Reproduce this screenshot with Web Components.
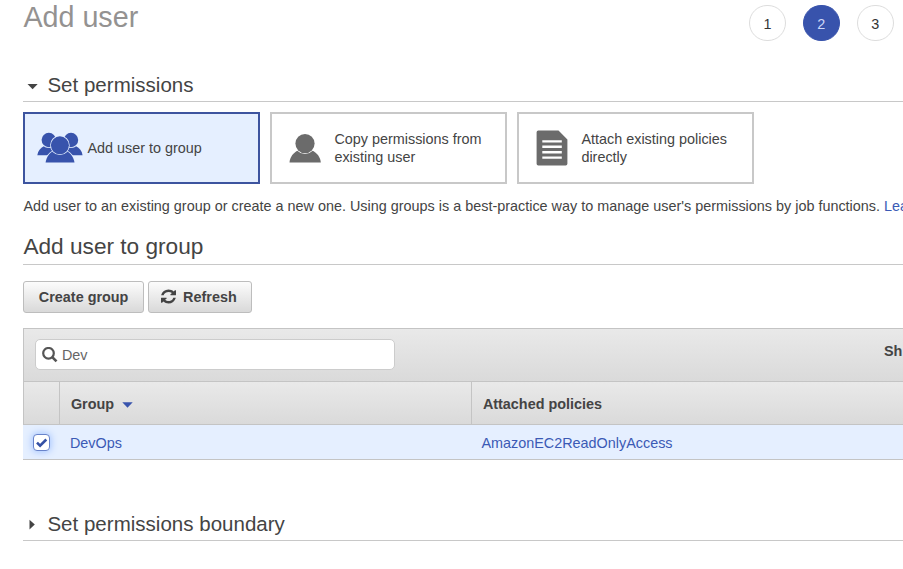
<!DOCTYPE html>
<html lang="en">
<head>
<meta charset="utf-8">
<title>Add user</title>
<style>
html,body{margin:0;height:100%;overflow:hidden;background:#fff}
body{font-family:"Liberation Sans",Arial,sans-serif;font-size:14.4px;color:#444}
</style>
</head>
<body>
<add-user-page></add-user-page>
<script>
function define(name, html) {
  const template = document.createElement('template');
  template.innerHTML = html;
  customElements.define(name, class extends HTMLElement {
    constructor() {
      super();
      this.attachShadow({ mode: 'open' }).append(template.content.cloneNode(true));
    }
  });
}

define('step-badge', `
<style>
:host{display:flex;align-items:center;justify-content:center;width:36.5px;height:36.5px;box-sizing:border-box;border:1px solid #ddd;border-radius:50%;font-size:14.4px;color:#333;padding-top:3px}
:host([active]){background:#3853ac;border-color:#3853ac;color:#ccd7f8}
</style><slot></slot>`);

define('section-title', `
<style>
:host{display:flex;height:34px;box-sizing:border-box;border-bottom:1px solid #c8c8c8;font-size:20.5px;line-height:33px;letter-spacing:.02px}
svg{flex:none;width:24px;height:33px;fill:#444}
.closed{display:none}
:host([collapsed]) .closed{display:block}
:host([collapsed]) .open{display:none}
</style>
<svg class="open" viewBox="0 0 24 33"><path d="M4.500 16h10.200L9.600 21.200z"/></svg>
<svg class="closed" viewBox="0 0 24 33"><path d="M6.500 12.700v9.800l5.300-4.900z"/></svg>
<slot></slot>`);

define('option-card', `
<style>
:host{display:flex;align-items:center;width:237px;height:72px;box-sizing:border-box;border:2px solid #c8c8c8;line-height:18.5px;padding-left:12px;color:#444}
:host([selected]){background:#e5efff;border-color:#3d549f}
.icon{display:flex;width:50px;flex:none}
:host(:not([selected])) .icon{color:#6b6b6b}
:host([selected]) .icon{color:#3853ac}
</style>
<div class="icon"><slot name="icon"></slot></div><div><slot></slot></div>`);

define('tool-button', `
<style>
:host{display:flex;align-items:center;justify-content:center;box-sizing:border-box;height:32px;border:1px solid #bdbdbd;border-radius:3px;background:linear-gradient(#fcfcfc,#d9d9d9);font-weight:bold;color:#444}
</style><slot></slot>`);

define('search-box', `
<style>
:host{display:flex;align-items:center;box-sizing:border-box;width:360px;height:31px;border:1px solid #ccc;border-radius:5px;background:#fff;padding-left:6px;color:#666}
svg{width:16px;height:16px;margin-right:4px}
</style>
<svg viewBox="0 0 16 16" fill="none" stroke="#555"><circle cx="6.500" cy="6.300" r="5.300" stroke-width="2.200"/><path d="M10.500 10.400l4 4" stroke-width="2.600"/></svg><slot></slot>`);

define('check-box', `
<style>
:host{display:flex;box-sizing:border-box;width:17px;height:17px;border:1px solid #6883ca;border-radius:4px;background:#fff;box-shadow:0 0 7px 1px #a5c5ff;margin-top:-1px}
</style>
<svg viewBox="0 0 15 15" width="15" height="15"><path d="M3 7.600l3.100 3.100 6.200-6.200" fill="none" stroke="#3450a5" stroke-width="2.600"/></svg>`);

define('group-table', `
<style>
:host{display:block}
.bar{display:flex;justify-content:space-between;box-sizing:border-box;height:53px;border-top:1px solid #c4c4c4;border-left:1px solid #c4c4c4;background:linear-gradient(#e9e9e9,#dadada);padding:10px 0 0 10.5px}
.bar b{width:19px;white-space:nowrap;line-height:24px}
.row{display:grid;grid-template-columns:36px 412px 1fr;box-sizing:border-box}
.head{height:44px;border-top:1px solid #c4c4c4;border-bottom:1px solid #c4c4c4;background:linear-gradient(#e9e9e9,#dadada);font-weight:bold}
.head>div{display:flex;align-items:center;border-left:1px solid #c4c4c4;padding-left:10.5px;padding-top:1px}
.body{height:35px;background:#e5efff;border-bottom:1px solid #c4c4c4;color:#3b5ab5}
.body>div{display:flex;align-items:center;padding:1px 0 0 10px}
.body>div:nth-child(2){padding-left:10.5px}
svg{margin:3px 0 0 8px}
</style>
<div class="bar"><search-box>Dev</search-box><b>Sh</b></div>
<div class="row head"><div></div><div>Group<svg width="11" height="6" viewBox="0 0 11 6"><path d="M.3.3h10.400L5.500 5.700z" fill="#3853ac"/></svg></div><div>Attached policies</div></div>
<div class="row body"><div><check-box></check-box></div><div>DevOps</div><div>AmazonEC2ReadOnlyAccess</div></div>`);

define('add-user-page', `
<style>
:host{display:block;padding-left:23.4px;width:903px;height:569px;box-sizing:border-box;overflow:hidden}
header{display:flex;justify-content:space-between;height:68px;padding-right:9.5px;box-sizing:border-box}
h1{font-size:28.7px;font-weight:400;color:#949291;margin:0;line-height:34px}
.steps{display:flex;gap:17.4px;padding-top:4.5px}
.cards{display:flex;gap:10px;padding-top:10px}
p{margin:12px 0 0;line-height:20px;white-space:nowrap;letter-spacing:.003px}
p span{color:#3b5ab5}
h2{font-size:22.65px;font-weight:400;margin:12px 0 16px;height:37px;box-sizing:border-box;border-bottom:1px solid #c8c8c8;line-height:37px;color:#444}
.actions{display:flex;gap:4px;margin-bottom:15px}
.create{width:120.500px}.refresh{width:104px}
.refresh svg{margin:-2px 7px 0 -2px}
.boundary{margin-top:47px}
svg{display:block}
</style>
<header><h1>Add user</h1><div class="steps"><step-badge>1</step-badge><step-badge active>2</step-badge><step-badge>3</step-badge></div></header>
<section-title>Set permissions</section-title>
<div class="cards">
<option-card selected><svg slot="icon" width="50" height="36" viewBox="0 0 50 36" fill="currentColor">
<g stroke="#e5efff" stroke-width="1.600">
<path stroke="none" d="M.300 25.200C.800 21 3.600 18 6.800 16.200h32.300c3.200 1.800 6 4.800 6.500 9z"/>
<circle cx="11.800" cy="10" r="7.200" paint-order="stroke"/><circle cx="34" cy="10" r="7.200" paint-order="stroke"/>
<path paint-order="stroke" d="M8.600 32.500c.8-5.500 3.700-9.600 8-11.500h12.700c4.300 1.900 7.300 6 8.200 11.500z"/>
<circle paint-order="stroke" cx="22.900" cy="15.300" r="9"/></g></svg>Add user to group</option-card>
<option-card><svg slot="icon" width="50" height="36" viewBox="0 0 50 36" fill="currentColor">
<path d="M5.500 32.400C6 26.800 9.500 22.500 14 20.500h14c4.700 2 8.300 6.200 8.800 11.900z"/>
<circle cx="21" cy="13.600" r="9.600" stroke="#fff" stroke-width="1.600" paint-order="stroke"/></svg>Copy permissions from<br>existing user</option-card>
<option-card><svg slot="icon" width="50" height="36" viewBox="0 0 50 36">
<path d="M7.300.5h20.200l8.900 9v24.300q0 1.700-1.700 1.700H7.300q-1.700 0-1.700-1.700V2.200Q5.600.5 7.300.5z" fill="currentColor"/>
<path d="M11.300 11.400h19.500M11.300 16.800h19.500M11.300 22.200h19.500M11.300 27.600h19.500" stroke="#fff" stroke-width="2.400"/></svg>Attach existing policies<br>directly</option-card>
</div>
<p>Add user to an existing group or create a new one. Using groups is a best-practice way to manage user's permissions by job functions. <span>Lea</span></p>
<h2>Add user to group</h2>
<div class="actions"><tool-button class="create">Create group</tool-button><tool-button class="refresh"><svg width="15" height="15" viewBox="0 0 1536 1664" preserveAspectRatio="none" fill="#444"><path transform="translate(0 64)" d="M1511 928q0 5-1 7-64 268-268 434.500t-478 166.500q-146 0-282.500-55t-243.500-157l-129 129q-19 19-45 19t-45-19-19-45v-448q0-26 19-45t45-19h448q26 0 45 19t19 45-19 45l-137 137q71 66 161 102t187 36q134 0 250-65t186-179q11-17 53-117 8-23 30-23h192q13 0 22.500 9.500t9.500 22.500zm25-800v448q0 26-19 45t-45 19h-448q-26 0-45-19t-19-45 19-45l138-138q-148-137-349-137-134 0-250 65t-186 179q-11 17-53 117-8 23-30 23h-199q-13 0-22.500-9.500t-9.500-22.500v-7q65-268 270-434.500t480-166.500q146 0 284 55.500t245 156.500l130-129q19-19 45-19t45 19 19 45z"/></svg>Refresh</tool-button></div>
<group-table></group-table>
<section-title class="boundary" collapsed>Set permissions boundary</section-title>`);
</script>
</body>
</html>
